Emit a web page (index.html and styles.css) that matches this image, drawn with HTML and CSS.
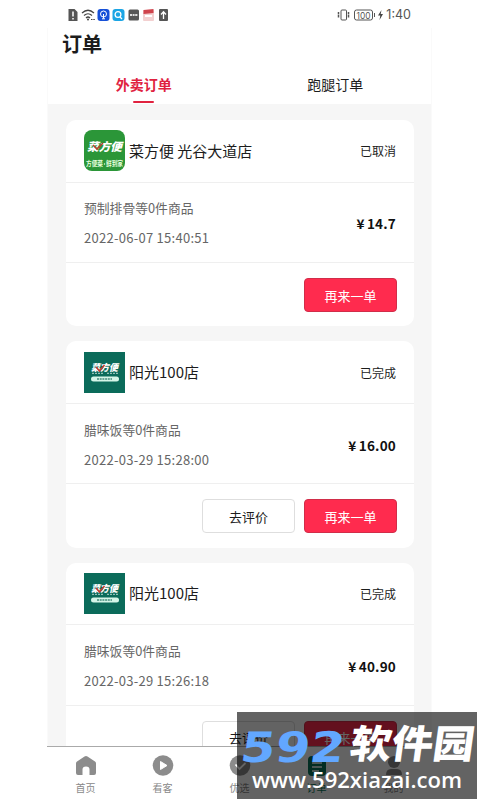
FILE: index.html
```html
<!DOCTYPE html>
<html lang="zh-CN">
<head>
<meta charset="utf-8">
<title>订单</title>
<link rel="stylesheet" href="styles.css">
</head>
<body>
<svg class="defs" width="0" height="0">
  <symbol id="store-dark" viewBox="0 0 41 41">
    <rect width="41" height="41" fill="#0b6b5a"/>
    <text x="7" y="18.500" class="logo-word" font-size="9.500" textLength="27" lengthAdjust="spacingAndGlyphs">菜方便</text>
    <path d="M12 15l3.500 4 5-6" fill="none" stroke="#c43a30" stroke-width="1.600"/>
    <path d="M8 21.300h11M23 21.300h11" stroke="#b5d8cf" stroke-width="1" stroke-dasharray="2 1"/>
    <rect x="7" y="24.500" width="28" height="5" rx="2.500" fill="#d5f5e8"/>
    <path d="M13 27h15" stroke="#438b7b" stroke-width="1.300" stroke-dasharray="2 .7"/>
  </symbol>
</svg>
<div class="phone">
  <header class="status">
    <svg class="status-left" width="102" height="14" viewBox="0 0 102 14">
      <path d="M1.500 1h6l3 3v9h-9z" fill="#555"/><path d="M6 3.500v5M6 10v1.500" stroke="#fff" stroke-width="1.500"/>
      <g fill="none" stroke="#444" stroke-width="1.200"><path d="M15 5q6-5.500 12 0M17 7.500q4-3.500 8 0M19 10q2-2 4 0"/></g><circle cx="21" cy="11.500" r="1" fill="#444"/><path d="M24 11.500h4" stroke="#444" stroke-dasharray="1.500 .8"/>
      <rect x="30.500" y="1" width="12" height="12" rx="3" fill="#1650d8"/><circle cx="36.500" cy="6" r="3" fill="none" stroke="#fff"/><path d="M36.500 6v4.500M35 10.800h3" stroke="#fff"/>
      <rect x="45.500" y="1" width="12" height="12" rx="3" fill="#1ba5e4"/><circle cx="51" cy="6.500" r="2.900" fill="none" stroke="#fff" stroke-width="1.300"/><path d="M53 9l2 2" stroke="#fff" stroke-width="1.300"/>
      <rect x="61.500" y="1.500" width="10.500" height="11" rx="1.500" fill="#555"/><path d="M63 7h8" stroke="#ddd" stroke-width="2" stroke-dasharray="2 .6"/>
      <rect x="76" y="2" width="11" height="11" rx="1" fill="#f3d0d0"/><path d="M76.500 2l10-1v4l-10 1z" fill="#cf434c"/><path d="M78 8h7" stroke="#fff" stroke-width="2"/>
      <rect x="92" y="1" width="9" height="12" rx="1" fill="#555"/><path d="M96.500 11V4M94 6.500l2.500-2.700L99 6.500" fill="none" stroke="#fff" stroke-width="1.300"/>
    </svg>
    <div class="status-right">
      <svg width="50" height="12" viewBox="0 0 50 12">
        <g fill="none" stroke="#555"><rect x="5" y="1" width="5.500" height="10" rx="1"/><path d="M2.500 3v6M12.500 3v6" stroke-width="1.500" stroke-dasharray="2.500 .5"/><rect x="18.500" y="1" width="18" height="10" rx="2"/><path d="M38.500 4v4"/></g>
        <text x="20.500" y="9.500" class="battery" textLength="14" lengthAdjust="spacingAndGlyphs">100</text>
        <path d="M45.500 1l-3.500 5.500h2.300L43.500 11l3.500-6h-2.300z" fill="#444"/>
      </svg>
      <span>1:40</span>
    </div>
  </header>
  <main class="app">
    <h1>订单</h1>
    <nav class="tabs"><span class="tab active">外卖订单</span><span class="tab">跑腿订单</span></nav>
    <div class="orders">
      <article class="card">
        <div class="head">
          <svg class="logo" viewBox="0 0 41 41">
            <rect width="41" height="41" rx="8" fill="#2b9638"/>
            <text x="3" y="21" class="logo-word" font-size="11.500" textLength="35" lengthAdjust="spacingAndGlyphs">菜方便</text>
            <path d="M9 15l4 4 6-6" fill="none" stroke="#b44530" stroke-width="1.600"/>
            <g class="logo-tag"><text x="2" y="36" textLength="17" lengthAdjust="spacingAndGlyphs">方便菜</text><circle cx="20.500" cy="34" r=".7"/><text x="22" y="36" textLength="17" lengthAdjust="spacingAndGlyphs">鲜到家</text></g>
          </svg>
          <h2>菜方便 光谷大道店</h2><span class="state">已取消</span>
        </div>
        <div class="body"><div><p>预制排骨等0件商品</p><time>2022-06-07 15:40:51</time></div><strong class="price">¥ 14.7</strong></div>
        <div class="foot"><button class="again">再来一单</button></div>
      </article>
      <article class="card">
        <div class="head"><svg class="logo"><use href="#store-dark"/></svg><h2>阳光100店</h2><span class="state">已完成</span></div>
        <div class="body"><div><p>腊味饭等0件商品</p><time>2022-03-29 15:28:00</time></div><strong class="price">¥ 16.00</strong></div>
        <div class="foot"><button>去评价</button><button class="again">再来一单</button></div>
      </article>
      <article class="card">
        <div class="head"><svg class="logo"><use href="#store-dark"/></svg><h2>阳光100店</h2><span class="state">已完成</span></div>
        <div class="body"><div><p>腊味饭等0件商品</p><time>2022-03-29 15:26:18</time></div><strong class="price">¥ 40.90</strong></div>
        <div class="foot"><button>去评价</button><button class="again">再来一单</button></div>
      </article>
    </div>
  </main>
  <nav class="bottom">
    <a><svg viewBox="0 0 22 22"><path d="M2 6.500l7.500-5q1.500-1 3 0l7.500 5q1 .7 1 2V18q0 2-2 2h-4.500v-5.500q0-3-3.500-3t-3.500 3V20H3q-2 0-2-2V8.500q0-1.300 1-2z" fill="#8c8c8c"/></svg>首页</a>
    <a><svg viewBox="0 0 22 22"><circle cx="11" cy="10.500" r="10.300" fill="#8c8c8c"/><path d="M8.500 6.500v8l6.500-4z" fill="#fff" stroke="#fff" stroke-linejoin="round"/></svg>看客</a>
    <a><svg viewBox="0 0 22 22"><circle cx="11" cy="10.500" r="10.300" fill="#8c8c8c"/><path d="M6.500 9.500l4 4.500 6-6" fill="none" stroke="#fff" stroke-width="1.800"/></svg>优选</a>
    <a class="current"><svg viewBox="0 0 22 22"><rect x="2" y="1" width="18" height="20" rx="4" fill="#08745a"/><path d="M6 8h10M6 12h10M6 16h7" stroke="#fff" stroke-width="1.600"/></svg>订单</a>
    <a><svg viewBox="0 0 22 22"><circle cx="11" cy="7" r="6" fill="#8c8c8c"/><path d="M3 20q0-6 5-6h6q5 0 5 6z" fill="#8c8c8c"/></svg>我的</a>
  </nav>
</div>
<svg class="watermark" viewBox="0 0 240 87" width="240" height="87">
  <rect width="240" height="87" fill="#000" fill-opacity=".61"/>
  <g transform="translate(0 50) skewX(-8)">
    <text class="mark-num" x="2" y="0" textLength="104" lengthAdjust="spacingAndGlyphs">592</text>
    <text class="mark-cn" x="111" y="-4" textLength="124" lengthAdjust="spacingAndGlyphs">软件园</text>
  </g>
  <text class="mark-url" x="15" y="76" textLength="210" lengthAdjust="spacingAndGlyphs">www.592xiazai.com</text>
</svg>
</body>
</html>
```
FILE: styles.css
```css
* { box-sizing: border-box; }
body { margin: 0; width: 480px; height: 800px; overflow: hidden; position: relative; background: #fff; color: #1c1c1c; font-family: "Noto Sans CJK SC", sans-serif; }
h1, h2, p { margin: 0; font-weight: 400; }
.defs { position: absolute; }
.phone { width: 385px; height: 800px; margin-left: 47px; display: flex; flex-direction: column; }
.status { height: 28px; flex: none; display: flex; justify-content: space-between; padding: 8px 21px 0 20px; }
.status-left { flex: none; }
.status-right { display: flex; height: 14px; align-items: center; font: 12.500px/14px Inter, sans-serif; color: #555; }
.battery { font: 9.500px Inter, sans-serif; fill: #555; }
.app { flex: 1; min-height: 0; display: flex; flex-direction: column; border: solid #fafafa; border-width: 0 1px; }
h1 { height: 36px; padding-left: 14px; font-size: 20px; line-height: 32px; font-weight: 700; }
.tabs { height: 40px; flex: none; display: flex; }
.tab { flex: 1; display: flex; flex-direction: column; align-items: center; font-size: 14px; line-height: 20px; padding-top: 10px; }
.tab.active { color: #e0223f; font-weight: 700; }
.tab.active::after { content: ""; width: 21px; height: 2px; margin-top: 7px; border-radius: 1px; background: #e0223f; }
.orders { flex: 1; min-height: 0; overflow: hidden; background: #f6f6f6; padding: 16px 17px 0 18px; display: flex; flex-direction: column; gap: 15px; }
.card { flex: none; height: 206.300px; border-radius: 10px; background: #fff; }
.head { height: 62.500px; padding: 0 18px; display: flex; align-items: center; border-bottom: 1px solid #efefef; }
.logo { width: 41px; height: 41px; flex: none; margin-right: 4px; }
.logo-word { font-family: "Noto Sans CJK SC", sans-serif; font-weight: 900; font-style: italic; fill: #fff; }
.logo-tag { font: 700 6.500px "Noto Sans CJK SC", sans-serif; fill: #e8ffdf; }
h2 { font-size: 15px; line-height: 24px; flex: 1; }
.state { font-size: 12px; }
.body { height: 80.500px; padding: 2px 18px 0; display: flex; align-items: center; justify-content: space-between; border-bottom: 1px solid #efefef; color: #666; }
.body p { font-size: 12.800px; line-height: 20px; }
.body time { display: block; margin-top: 10px; font-size: 13px; line-height: 20px; letter-spacing: .27px; }
.price { color: #111; font-size: 13.500px; font-weight: 700; letter-spacing: .2px; word-spacing: -1px; }
.foot { height: 63px; padding: 15px 17px 0 0; display: flex; justify-content: flex-end; gap: 9px; }
button { width: 93px; height: 34px; padding: 0; border: 1px solid #dedede; border-radius: 4px; background: #fff; color: #1c1c1c; font: 13px "Noto Sans CJK SC", sans-serif; }
button.again { background: #ff2b4e; border-color: #d12d49; color: #fff; }
.bottom { height: 54px; flex: none; border-top: 1px solid #aaa; display: flex; background: #fff; }
.bottom a { flex: 1; display: flex; flex-direction: column; align-items: center; padding-top: 8px; font-size: 10px; line-height: 15px; color: #888; }
.bottom svg { width: 22px; height: 22px; margin-bottom: 3px; }
.bottom .current { color: #08745a; }
.watermark { position: absolute; left: 237px; top: 712px; }
.mark-num { font: 700 42px "DejaVu Sans", sans-serif; fill: #62a7ff; }
.mark-cn { font: 900 39px "Noto Sans CJK SC", sans-serif; fill: #fff; }
.mark-url { font: 600 22px "Open Sans", "Noto Sans", sans-serif; fill: #fff; }
```
